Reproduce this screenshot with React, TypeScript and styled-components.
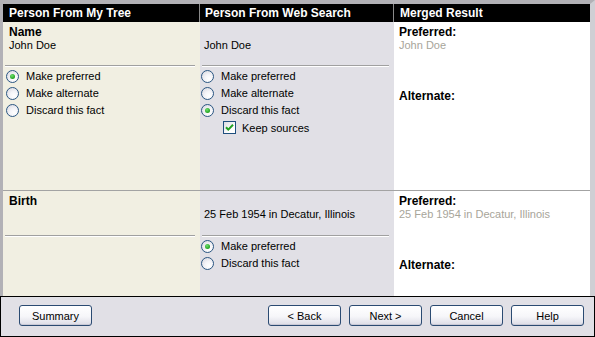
import React from 'react';
import styled, { createGlobalStyle } from 'styled-components';

const Global = createGlobalStyle`
  html, body { margin: 0; padding: 0; background: #fff; }
  body { font-family: "Liberation Sans", Arial, sans-serif; font-size: 11px; color: #000; }
  * { box-sizing: border-box; }
`;

type Tone = 'tree' | 'web' | 'merged';
const toneBg: Record<Tone, string> = { tree: '#f1efe2', web: '#e1e0e6', merged: '#ffffff' };

const Window = styled.div`
  width: 595px;
  height: 337px;
  display: flex;
  flex-direction: column;
  overflow: hidden;
`;

const Panel = styled.div`
  height: 296px;
  border-top: 4px solid #b2b1b6;
  border-left: 3px solid #b2b1b6;
  border-right: 5px solid #cfcfd4;
  display: grid;
  grid-template-columns: 197px 194px 196px;
  grid-template-rows: 18px 168px 1px 105px;
`;

const HeaderCell = styled.div<{ $divider?: boolean; $pad: number }>`
  background: #000;
  color: #fff;
  font-weight: bold;
  font-size: 12px;
  line-height: 18px;
  padding-left: ${p => p.$pad}px;
  border-right: ${p => (p.$divider ? '1px solid #8a8a8a' : 'none')};
  white-space: nowrap;
`;

const RowDivider = styled.div`
  grid-column: 1 / -1;
  background: #a3a3a3;
`;

const Cell = styled.div<{ $tone: Tone }>`
  background: ${p => toneBg[p.$tone]};
  display: flex;
  flex-direction: column;
  overflow: hidden;
`;

const FactHead = styled.div<{ $pad: number; $h: number }>`
  height: ${p => p.$h}px;
  padding: 4px 0 0 ${p => p.$pad}px;
  display: flex;
  flex-direction: column;
`;

const Title = styled.div`
  font-weight: bold;
  font-size: 12px;
  height: 13px;
  line-height: 13px;
`;

const Value = styled.div<{ $muted?: boolean }>`
  height: 13px;
  line-height: 13px;
  color: ${p => (p.$muted ? '#a7a59a' : '#000')};
  white-space: nowrap;
`;

const Rule = styled.div`
  margin: 0 5px 0 2px;
  border-top: 1px solid #a0a0a0;
  border-bottom: 1px solid #ffffff;
`;

const Options = styled.div<{ $pad: number }>`
  display: flex;
  flex-direction: column;
  padding: 1px 0 0 ${p => p.$pad}px;
`;

const Option = styled.label`
  height: 17px;
  display: flex;
  align-items: center;
  gap: 7px;
  line-height: 13px;
  white-space: nowrap;
`;

const Radio = styled.span<{ $on?: boolean }>`
  width: 13px;
  height: 13px;
  border-radius: 50%;
  border: 1px solid #2a5682;
  background: radial-gradient(circle at 65% 70%, #ffffff 0%, #f4f4f8 40%, #d3d3dc 100%);
  display: flex;
  align-items: center;
  justify-content: center;
  flex: none;
  &::after {
    content: '';
    display: ${p => (p.$on ? 'block' : 'none')};
    width: 5px;
    height: 5px;
    border-radius: 50%;
    background: radial-gradient(circle at 40% 35%, #6ee06e 0%, #21a121 70%);
  }
`;

const SubOption = styled.label`
  height: 17px;
  display: flex;
  align-items: center;
  gap: 6px;
  padding-left: 22px;
  white-space: nowrap;
`;

const CheckBox = styled.span`
  width: 13px;
  height: 13px;
  border: 1px solid #1e4f7e;
  background: linear-gradient(135deg, #dcdce2 0%, #ffffff 70%);
  display: flex;
  align-items: center;
  justify-content: center;
  flex: none;
`;

const MergedBody = styled.div`
  padding: 4px 0 0 5px;
  display: flex;
  flex-direction: column;
`;

const AltTitle = styled(Title)`
  margin-top: 38px;
`;

const Footer = styled.div`
  height: 41px;
  border: 1px solid #000;
  background: #e1e0e6;
  display: flex;
  align-items: flex-start;
  padding: 8px 10px 0 18px;
`;

const NavGroup = styled.div`
  margin-left: auto;
  display: flex;
  gap: 8px;
`;

const Button = styled.button`
  width: 73px;
  height: 21px;
  padding: 0;
  border: 1px solid #2b4b72;
  border-radius: 3px;
  background: linear-gradient(#ffffff 0%, #f6f6f9 55%, #dcdce6 100%);
  box-shadow: inset 0 -1px 0 #c9c9d6;
  font-family: "Liberation Sans", Arial, sans-serif;
  font-size: 11px;
  color: #000;
`;

const Check = () => (
  <svg width="9" height="9" viewBox="0 0 9 9">
    <path d="M1 4.2 L3.3 6.6 L8 1.8" fill="none" stroke="#21a121" strokeWidth="2" />
  </svg>
);

export default function App() {
  return (
    <Window>
      <Global />
      <Panel>
        <HeaderCell $pad={6} $divider>Person From My Tree</HeaderCell>
        <HeaderCell $pad={5} $divider>Person From Web Search</HeaderCell>
        <HeaderCell $pad={6}>Merged Result</HeaderCell>

        <Cell $tone="tree">
          <FactHead $pad={6} $h={43}>
            <Title>Name</Title>
            <Value>John Doe</Value>
          </FactHead>
          <Rule />
          <Options $pad={3}>
            <Option><Radio $on />Make preferred</Option>
            <Option><Radio />Make alternate</Option>
            <Option><Radio />Discard this fact</Option>
          </Options>
        </Cell>
        <Cell $tone="web">
          <FactHead $pad={4} $h={43}>
            <Title />
            <Value>John Doe</Value>
          </FactHead>
          <Rule />
          <Options $pad={1}>
            <Option><Radio />Make preferred</Option>
            <Option><Radio />Make alternate</Option>
            <Option><Radio $on />Discard this fact</Option>
            <SubOption><CheckBox><Check /></CheckBox>Keep sources</SubOption>
          </Options>
        </Cell>
        <Cell $tone="merged">
          <MergedBody>
            <Title>Preferred:</Title>
            <Value $muted>John Doe</Value>
            <AltTitle>Alternate:</AltTitle>
          </MergedBody>
        </Cell>

        <RowDivider />

        <Cell $tone="tree">
          <FactHead $pad={6} $h={44}>
            <Title>Birth</Title>
            <Value />
          </FactHead>
          <Rule />
        </Cell>
        <Cell $tone="web">
          <FactHead $pad={4} $h={44}>
            <Title />
            <Value>25 Feb 1954 in Decatur, Illinois</Value>
          </FactHead>
          <Rule />
          <Options $pad={1}>
            <Option><Radio $on />Make preferred</Option>
            <Option><Radio />Discard this fact</Option>
          </Options>
        </Cell>
        <Cell $tone="merged">
          <MergedBody>
            <Title>Preferred:</Title>
            <Value $muted>25 Feb 1954 in Decatur, Illinois</Value>
            <AltTitle>Alternate:</AltTitle>
          </MergedBody>
        </Cell>
      </Panel>
      <Footer>
        <Button>Summary</Button>
        <NavGroup>
          <Button>&lt; Back</Button>
          <Button>Next &gt;</Button>
          <Button>Cancel</Button>
          <Button>Help</Button>
        </NavGroup>
      </Footer>
    </Window>
  );
}
